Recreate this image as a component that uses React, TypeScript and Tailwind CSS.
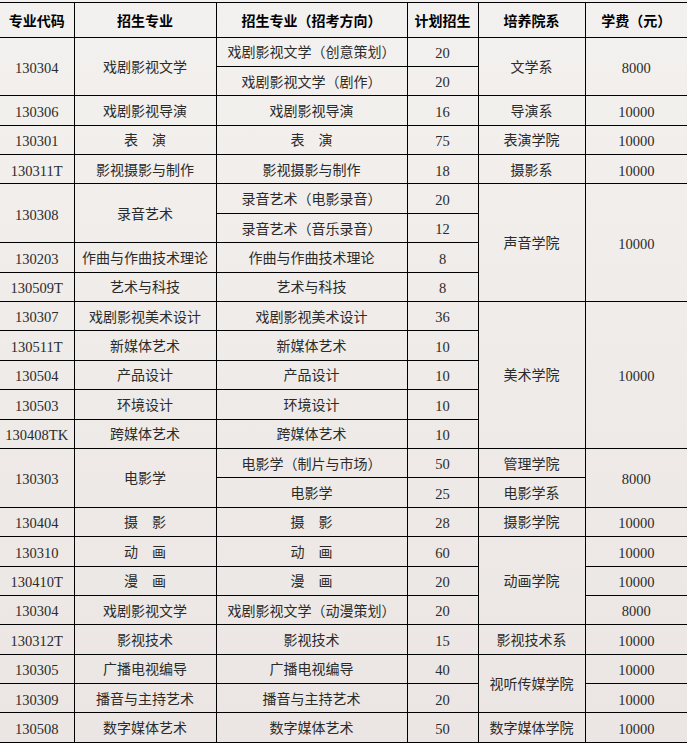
import React from "react";

type Cell = { text: string; span?: number } | null;

// each row: code, major, direction, plan, dept, fee  (null = covered by rowspan)
const rows: Cell[][] = [
  [{ text: "130304", span: 2 }, { text: "戏剧影视文学", span: 2 }, { text: "戏剧影视文学（创意策划）" }, { text: "20" }, { text: "文学系", span: 2 }, { text: "8000", span: 2 }],
  [null, null, { text: "戏剧影视文学（剧作）" }, { text: "20" }, null, null],
  [{ text: "130306" }, { text: "戏剧影视导演" }, { text: "戏剧影视导演" }, { text: "16" }, { text: "导演系" }, { text: "10000" }],
  [{ text: "130301" }, { text: "表　演" }, { text: "表　演" }, { text: "75" }, { text: "表演学院" }, { text: "10000" }],
  [{ text: "130311T" }, { text: "影视摄影与制作" }, { text: "影视摄影与制作" }, { text: "18" }, { text: "摄影系" }, { text: "10000" }],
  [{ text: "130308", span: 2 }, { text: "录音艺术", span: 2 }, { text: "录音艺术（电影录音）" }, { text: "20" }, { text: "声音学院", span: 4 }, { text: "10000", span: 4 }],
  [null, null, { text: "录音艺术（音乐录音）" }, { text: "12" }, null, null],
  [{ text: "130203" }, { text: "作曲与作曲技术理论" }, { text: "作曲与作曲技术理论" }, { text: "8" }, null, null],
  [{ text: "130509T" }, { text: "艺术与科技" }, { text: "艺术与科技" }, { text: "8" }, null, null],
  [{ text: "130307" }, { text: "戏剧影视美术设计" }, { text: "戏剧影视美术设计" }, { text: "36" }, { text: "美术学院", span: 5 }, { text: "10000", span: 5 }],
  [{ text: "130511T" }, { text: "新媒体艺术" }, { text: "新媒体艺术" }, { text: "10" }, null, null],
  [{ text: "130504" }, { text: "产品设计" }, { text: "产品设计" }, { text: "10" }, null, null],
  [{ text: "130503" }, { text: "环境设计" }, { text: "环境设计" }, { text: "10" }, null, null],
  [{ text: "130408TK" }, { text: "跨媒体艺术" }, { text: "跨媒体艺术" }, { text: "10" }, null, null],
  [{ text: "130303", span: 2 }, { text: "电影学", span: 2 }, { text: "电影学（制片与市场）" }, { text: "50" }, { text: "管理学院" }, { text: "8000", span: 2 }],
  [null, null, { text: "电影学" }, { text: "25" }, { text: "电影学系" }, null],
  [{ text: "130404" }, { text: "摄　影" }, { text: "摄　影" }, { text: "28" }, { text: "摄影学院" }, { text: "10000" }],
  [{ text: "130310" }, { text: "动　画" }, { text: "动　画" }, { text: "60" }, { text: "动画学院", span: 3 }, { text: "10000" }],
  [{ text: "130410T" }, { text: "漫　画" }, { text: "漫　画" }, { text: "20" }, null, { text: "10000" }],
  [{ text: "130304" }, { text: "戏剧影视文学" }, { text: "戏剧影视文学（动漫策划）" }, { text: "20" }, null, { text: "8000" }],
  [{ text: "130312T" }, { text: "影视技术" }, { text: "影视技术" }, { text: "15" }, { text: "影视技术系" }, { text: "10000" }],
  [{ text: "130305" }, { text: "广播电视编导" }, { text: "广播电视编导" }, { text: "40" }, { text: "视听传媒学院", span: 2 }, { text: "10000" }],
  [{ text: "130309" }, { text: "播音与主持艺术" }, { text: "播音与主持艺术" }, { text: "20" }, null, { text: "10000" }],
  [{ text: "130508" }, { text: "数字媒体艺术" }, { text: "数字媒体艺术" }, { text: "50" }, { text: "数字媒体学院" }, { text: "10000" }],
];

const headers = ["专业代码", "招生专业", "招生专业（招考方向）", "计划招生", "培养院系", "学费（元）"];
const widths = ["w-[74px]", "w-[142px]", "w-[191px]", "w-[71px]", "w-[107px]", "w-[102px]"];

export default function App() {
  return (
    <div className="w-[687px] h-[743px] overflow-hidden pt-[1.5px] bg-gradient-to-b from-[#f3f1ef] via-[#efebe8] to-[#ebe6e3]">
      <table
        className="w-[687px] table-fixed border-collapse text-center text-[14px] text-[#2b2b2b]"
        style={{ fontFamily: '"Liberation Serif", "Noto Sans CJK SC", serif' }}
      >
        <colgroup>
          {widths.map((w, i) => (
            <col key={i} className={w} />
          ))}
        </colgroup>
        <thead>
          <tr className="h-[35px]">
            {headers.map((h, i) => (
              <th
                key={i}
                className={
                  "border border-black font-bold text-black text-[14px] pt-[1px] " +
                  (i === 0 ? "border-l-0 " : "") +
                  (i === 5 ? "border-r-0" : "")
                }
                style={{ fontFamily: '"Noto Sans CJK SC", sans-serif' }}
              >
                {h}
              </th>
            ))}
          </tr>
        </thead>
        <tbody>
          {rows.map((r, ri) => (
            <tr key={ri} className="h-[29.4px]">
              {r.map((c, ci) =>
                c ? (
                  <td
                    key={ci}
                    rowSpan={c.span}
                    className={
                      "border border-black px-0 pt-[3px] pb-0 leading-none whitespace-nowrap " +
                      (ci === 0 ? "border-l-0 " : "") +
                      (ci === 5 ? "border-r-0 " : "") +
                      (ci === 0 || ci === 3 || ci === 5 ? "text-[14.5px]" : "")
                    }
                  >
                    {c.text}
                  </td>
                ) : null
              )}
            </tr>
          ))}
        </tbody>
      </table>
    </div>
  );
}
